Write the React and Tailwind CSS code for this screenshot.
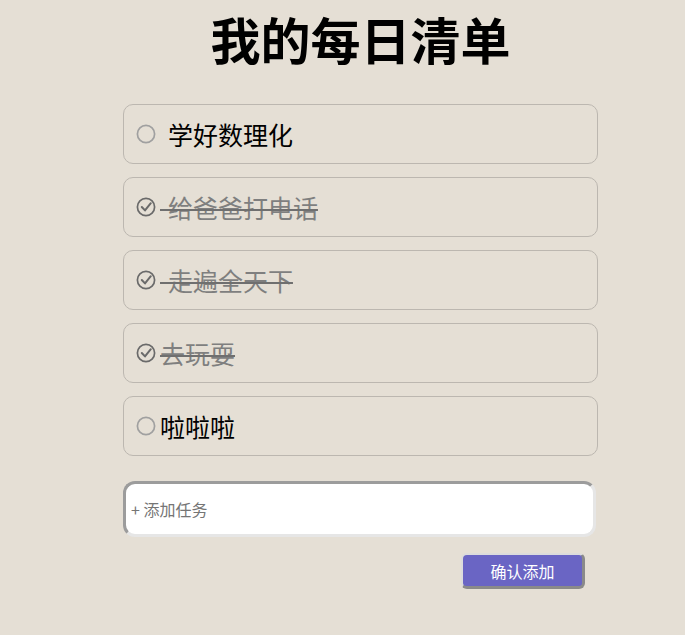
import { useState } from 'react'

const initialTodos = [
  { id: 1, text: ' 学好数理化', done: false },
  { id: 2, text: ' 给爸爸打电话', done: true },
  { id: 3, text: ' 走遍全天下', done: true },
  { id: 4, text: '去玩耍', done: true },
  { id: 5, text: '啦啦啦', done: false },
]

function CheckIcon({ done }) {
  return (
    <svg width="20" height="20" viewBox="0 0 20 20" className="mr-[4px] shrink-0">
      <circle cx="10" cy="10" r="8.6" fill="none" stroke={done ? '#6a6a6a' : '#a0a0a0'} strokeWidth="1.7" />
      {done && (
        <path d="M5.8 10 L9 13.4 L14.8 6.2" fill="none" stroke="#6a6a6a" strokeWidth="2" strokeLinecap="round" strokeLinejoin="round" />
      )}
    </svg>
  )
}

export default function App() {
  const [todos, setTodos] = useState(initialTodos)
  const [value, setValue] = useState('')

  const toggle = (id) => {
    setTodos(todos.map(t => (t.id === id ? { ...t, done: !t.done } : t)))
  }

  const addTodo = () => {
    if (!value.trim()) return
    setTodos([...todos, { id: Date.now(), text: value.trim(), done: false }])
    setValue('')
  }

  return (
    <div
      className="min-h-[635px] bg-[#e5dfd5] pt-[3px]"
      style={{ fontFamily: '"Noto Sans CJK SC", "Noto Sans", sans-serif' }}
    >
      <div className="ml-[123px] w-[475px]">
        <h1 className="text-center text-[50px] font-bold leading-[70px] text-black">我的每日清单</h1>

        <ul className="mt-[31px] flex flex-col gap-[13px]">
          {todos.map(todo => (
            <li
              key={todo.id}
              onClick={() => toggle(todo.id)}
              className="flex h-[60px] items-center rounded-[10px] border border-[#bcb7b0] pl-[12px]"
            >
              <CheckIcon done={todo.done} />
              <span
                style={{ fontFamily: '"DejaVu Sans", "Noto Sans CJK SC", sans-serif' }}
                className={`whitespace-pre pt-[4px] text-[25px] leading-none ${
                  todo.done ? 'text-[#7f7f7f] line-through decoration-[#6f6f6f]' : 'text-black'
                }`}
              >
                {todo.text}
              </span>
            </li>
          ))}
        </ul>

        <input
          value={value}
          onChange={(e) => setValue(e.target.value)}
          placeholder="+ 添加任务"
          className="mt-[25px] block h-[56px] w-[473px] rounded-[12px] border-[3px] border-t-[#9c9c9c] border-l-[#9c9c9c] border-r-[#e6e6e6] border-b-[#e6e6e6] bg-white px-[5px] text-[16px] text-black outline-none placeholder:text-[#757575]"
        />

        <div className="mt-[16px] flex justify-end pr-[13px]">
          <button
            onClick={addTodo}
            className="h-[36px] w-[124px] rounded-[6px] border-t-2 border-l-2 border-r-[3px] border-b-[3px] border-t-[#dcdcdc] border-l-[#dcdcdc] border-r-[#8a8a8a] border-b-[#8a8a8a] bg-[#6a65c4] text-[16px] text-white"
          >
            确认添加
          </button>
        </div>
      </div>
    </div>
  )
}
